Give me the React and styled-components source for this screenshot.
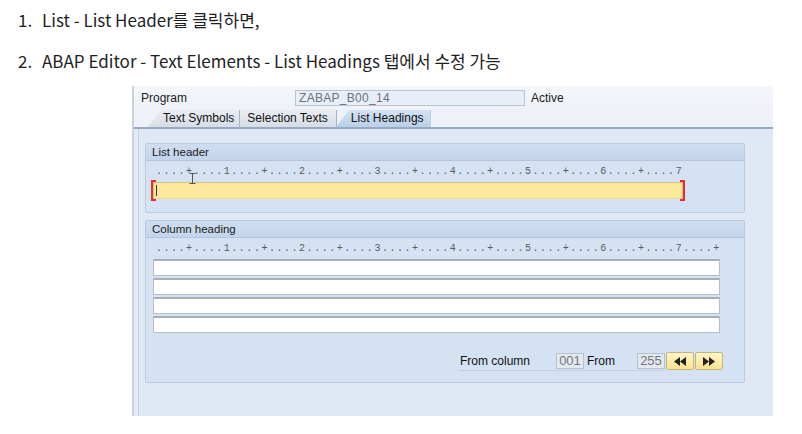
import React from "react";
import styled, { createGlobalStyle } from "styled-components";

const GlobalStyle = createGlobalStyle`
  html, body { margin: 0; padding: 0; background: #ffffff; }
  body { width: 802px; height: 434px; overflow: hidden; }
`;

const RULER1 = "....+....1....+....2....+....3....+....4....+....5....+....6....+....7";
const RULER2 = RULER1 + "....+";

export default function App() {
  return (
    <Page>
      <GlobalStyle />
      <Steps>
        <Step>
          <Num>1.</Num>
          <span>List - List Header를 클릭하면,</span>
        </Step>
        <Step>
          <Num>2.</Num>
          <span>ABAP Editor - Text Elements - List Headings 탭에서 수정 가능</span>
        </Step>
      </Steps>

      <SapWindow>
        <ProgramRow>
          <Label>Program</Label>
          <ProgramField>ZABAP_B00_14</ProgramField>
          <Label>Active</Label>
        </ProgramRow>

        <TabStrip>
          <Tab $first>Text Symbols</Tab>
          <Tab>Selection Texts</Tab>
          <Tab $active>List Headings</Tab>
        </TabStrip>

        <Panel>
          <Group>
            <GroupTitle>List header</GroupTitle>
            <GroupBody>
              <Ruler>{RULER1}</Ruler>
              <HeaderInputWrap>
                <HeaderInput>
                  <Caret />
                </HeaderInput>
                <Bracket $side="left" />
                <Bracket $side="right" />
                <IBeam width="7" height="11" viewBox="0 0 7 11">
                  <path d="M0.5 0.5 H6.5 M3.5 0.5 V10.5 M0.5 10.5 H6.5" stroke="#555" strokeWidth="1" fill="none" />
                </IBeam>
              </HeaderInputWrap>
            </GroupBody>
          </Group>

          <Group>
            <GroupTitle>Column heading</GroupTitle>
            <GroupBody $tall>
              <Ruler>{RULER2}</Ruler>
              <Lines>
                {[0, 1, 2, 3].map((i) => (
                  <HeadingLine key={i} />
                ))}
              </Lines>
              <Footer>
                <FieldGroup>
                  <FooterLabel $w={96}>From column</FooterLabel>
                  <NumBox>001</NumBox>
                  <FooterLabel $w={50}>From</FooterLabel>
                  <NumBox>255</NumBox>
                </FieldGroup>
                <NavButton>
                  <svg width="12" height="9" viewBox="0 0 12 9">
                    <path d="M6 0 L0 4.5 L6 9 Z M12 0 L6 4.5 L12 9 Z" fill="#222" />
                  </svg>
                </NavButton>
                <NavButton>
                  <svg width="12" height="9" viewBox="0 0 12 9">
                    <path d="M0 0 L6 4.5 L0 9 Z M6 0 L12 4.5 L6 9 Z" fill="#222" />
                  </svg>
                </NavButton>
              </Footer>
            </GroupBody>
          </Group>
        </Panel>
      </SapWindow>
    </Page>
  );
}

const Page = styled.div`
  width: 802px;
  height: 434px;
  background: #fff;
`;

const Steps = styled.div`
  display: flex;
  flex-direction: column;
  gap: 17px;
  padding: 8px 0 0 18px;
  color: #1e1e1e;
  font-size: 17px;
  font-family: "Noto Sans CJK KR", "Noto Sans", sans-serif;
  line-height: 24px;
`;

const Step = styled.div`
  display: flex;
`;

const Num = styled.span`
  width: 24px;
`;

const SapWindow = styled.div`
  margin: 13px 0 0 132px;
  width: 641px;
  height: 330px;
  background: #e1eaf5;
  border-left: 2px solid #c9d2dc;
  box-sizing: border-box;
  display: flex;
  flex-direction: column;
  font-family: "Liberation Sans", Arial, sans-serif;
  font-size: 12px;
  color: #1c1c1c;
`;

const ProgramRow = styled.div`
  display: flex;
  align-items: center;
  height: 24px;
  padding: 0 0 0 7px;
  background: linear-gradient(#f4f7fb, #eef2f8);
`;

const Label = styled.span`
  width: 154px;
  &:last-child { width: auto; margin-left: 6px; }
`;

const ProgramField = styled.div`
  width: 230px;
  height: 16px;
  box-sizing: border-box;
  border: 1px solid #b8c4d2;
  background: #e8eef5;
  color: #6a7280;
  font-size: 12px;
  line-height: 14px;
  padding-left: 3px;
  letter-spacing: 0.3px;
`;

const TabStrip = styled.div`
  display: flex;
  align-items: flex-end;
  height: 17px;
  padding-left: 14px;
  background: #eef2f8;
  border-bottom: 2px solid #98aac0;
`;

const Tab = styled.div`
  height: 17px;
  line-height: 17px;
  box-sizing: border-box;
  white-space: nowrap;
  padding: 0 ${(p) => (p.$first ? "5px" : "8px")} 0
    ${(p) => (p.$first || p.$active ? "15px" : "7px")};
  color: #111;
  border-right: 1px solid #a9b4c2;
  background: ${(p) =>
    p.$active
      ? "linear-gradient(#d4e3f4, #b9cfe9)"
      : "linear-gradient(#eaeef3, #d6dde6)"};
  clip-path: ${(p) =>
    p.$first || p.$active
      ? "polygon(13px 0, 100% 0, 100% 100%, 0 100%)"
      : "none"};
  ${(p) => (p.$active ? "margin-left: -1px; padding-right: 6px;" : "")}
`;

const Panel = styled.div`
  flex: 1;
  display: flex;
  flex-direction: column;
  gap: 7px;
  padding: 14px 0 0 6px;
  margin-left: 4px;
  border-left: 1px solid #c6d1de;
  background: #dfe8f4;
`;

const Group = styled.div`
  width: 598px;
  border: 1px solid #bccadb;
  border-radius: 2px;
  background: #d5e2f3;
`;

const GroupTitle = styled.div`
  height: 16px;
  line-height: 16px;
  padding-left: 6px;
  font-size: 11.5px;
  background: linear-gradient(#cfddef, #c3d5ec);
  border-bottom: 1px solid #b4c5da;
  color: #1a1a1a;
`;

const GroupBody = styled.div`
  padding: 5px 0 0 7px;
  height: ${(p) => (p.$tall ? "139px" : "46px")};
`;

const Ruler = styled.div`
  font-family: "Liberation Mono", monospace;
  font-size: 10px;
  letter-spacing: 1.53px;
  color: #5a5a5a;
  height: 12px;
  line-height: 12px;
  padding-left: 3px;
  white-space: nowrap;
`;

const HeaderInputWrap = styled.div`
  position: relative;
  margin-top: 4px;
  width: 530px;
`;

const HeaderInput = styled.div`
  height: 17px;
  box-sizing: border-box;
  background: #fde99b;
  border: 1px solid #d9c27a;
  border-bottom-color: #ecd894;
`;

const Caret = styled.div`
  position: absolute;
  left: 3px;
  top: 3px;
  width: 1px;
  height: 11px;
  background: #333;
`;

const Bracket = styled.div`
  position: absolute;
  top: -2px;
  ${(p) => (p.$side === "left" ? "left: -2px;" : "right: -2px;")}
  width: 3px;
  height: 17px;
  border: 2px solid #e0302c;
  ${(p) => (p.$side === "left" ? "border-right: none;" : "border-left: none;")}
`;

const IBeam = styled.svg`
  position: absolute;
  left: 36px;
  top: -9px;
`;

const Lines = styled.div`
  display: flex;
  flex-direction: column;
  gap: 2px;
  margin-top: 4px;
  width: 567px;
`;

const HeadingLine = styled.div`
  height: 17px;
  box-sizing: border-box;
  background: #fff;
  border: 1px solid #b9bec5;
  border-top: 2px solid #a9aeb5;
  border-radius: 1px;
`;

const Footer = styled.div`
  display: flex;
  align-items: center;
  height: 18px;
  margin: 19px 0 0 305px;
`;

const FieldGroup = styled.div`
  display: flex;
  align-items: center;
  height: 18px;
  padding-left: 2px;
  border-bottom: 1px solid #c4d0de;
`;

const FooterLabel = styled.span`
  width: ${(p) => p.$w}px;
  color: #111;
`;

const NumBox = styled.div`
  width: 28px;
  height: 16px;
  box-sizing: border-box;
  border: 1px solid #b7c1cd;
  background: #e3e9f0;
  color: #777;
  font-size: 13px;
  line-height: 14px;
  text-align: center;
  margin-right: 3px;
  &:last-child { margin-right: 0; }
`;

const NavButton = styled.div`
  width: 28px;
  height: 18px;
  box-sizing: border-box;
  margin-left: 1px;
  display: flex;
  align-items: center;
  justify-content: center;
  background: linear-gradient(#fff5c6, #fbe291);
  border: 1px solid #c6b47a;
  border-radius: 2px;
`;
